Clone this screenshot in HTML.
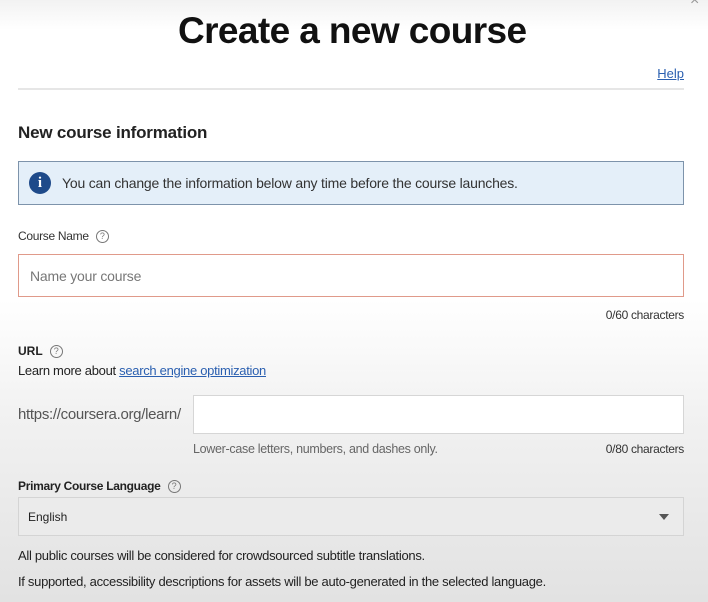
<!DOCTYPE html>
<html><head><meta charset="utf-8"><style>
*{margin:0;padding:0;box-sizing:border-box}
html,body{width:708px;height:602px;overflow:hidden}
body{font-family:"Liberation Sans",sans-serif;color:#1f1f1f;position:relative;
background:linear-gradient(to bottom,#f2f2f2 0px,#fff 30px,#fff 300px,#f1f1f1 420px,#e2e2e2 602px)}
.a{position:absolute;white-space:nowrap}
.q{display:inline-block;width:13px;height:13px;border:1px solid #777;border-radius:50%;font-size:9px;line-height:11px;text-align:center;color:#777;vertical-align:middle;margin-left:4px}
</style></head><body>
<div class="a" style="left:178px;top:10px;font-size:37px;font-weight:bold;letter-spacing:-0.6px;color:#111">Create a new course</div>
<div class="a" style="right:24px;top:66px;font-size:13px;color:#2a5fb0;text-decoration:underline">Help</div>
<div class="a" style="left:18px;top:88px;width:666px;height:2px;background:#e6e6e6"></div>
<div class="a" style="left:18px;top:123px;font-size:17px;font-weight:bold;color:#222;letter-spacing:-0.2px">New course information</div>
<div class="a" style="left:18px;top:161px;width:666px;height:44px;background:#e4eff9;border:1px solid #7d93ab"></div>
<div class="a" style="left:29px;top:172px;width:22px;height:22px;border-radius:50%;background:#1e4a8a;color:#fff;font-weight:bold;font-size:15px;text-align:center;line-height:22px;font-family:'Liberation Serif',serif">i</div>
<div class="a" style="left:62px;top:175px;font-size:14px;color:#333;letter-spacing:-0.2px">You can change the information below any time before the course launches.</div>
<div class="a" style="left:18px;top:229px;font-size:12px;color:#333;letter-spacing:-0.3px">Course Name <span class="q">?</span></div>
<div class="a" style="left:18px;top:254px;width:666px;height:43px;border:1px solid #e09a8a;background:#fff"></div>
<div class="a" style="left:30px;top:268px;font-size:14px;color:#777;letter-spacing:-0.2px">Name your course</div>
<div class="a" style="right:24px;top:308px;font-size:12px;color:#333;letter-spacing:-0.3px">0/60 characters</div>
<div class="a" style="left:18px;top:344px;font-size:12px;font-weight:bold;color:#222">URL <span class="q" style="font-weight:normal">?</span></div>
<div class="a" style="left:18px;top:363px;font-size:13px;color:#222;letter-spacing:-0.3px">Learn more about <span style="color:#2a5fb0;text-decoration:underline">search engine optimization</span></div>
<div class="a" style="left:18px;top:406px;font-size:15px;color:#555;letter-spacing:-0.3px">https://coursera.org/learn/</div>
<div class="a" style="left:193px;top:395px;width:491px;height:39px;border:1px solid #d6d6d6;background:#fff"></div>
<div class="a" style="left:193px;top:442px;font-size:12.5px;color:#666;letter-spacing:-0.3px">Lower-case letters, numbers, and dashes only.</div>
<div class="a" style="right:24px;top:442px;font-size:12px;color:#333;letter-spacing:-0.3px">0/80 characters</div>
<div class="a" style="left:18px;top:479px;font-size:12px;font-weight:bold;color:#222;letter-spacing:-0.3px">Primary Course Language <span class="q" style="font-weight:normal">?</span></div>
<div class="a" style="left:18px;top:497px;width:666px;height:39px;border:1px solid #d4d4d4;background:#ebebeb"></div>
<div class="a" style="left:28px;top:510px;font-size:12px;color:#222">English</div>
<div class="a" style="left:659px;top:514px;width:0;height:0;border-left:5px solid transparent;border-right:5px solid transparent;border-top:6px solid #555"></div>
<div class="a" style="left:18px;top:548px;font-size:13px;color:#222;letter-spacing:-0.3px">All public courses will be considered for crowdsourced subtitle translations.</div>
<div class="a" style="left:18px;top:574px;font-size:13px;color:#222;letter-spacing:-0.3px">If supported, accessibility descriptions for assets will be auto-generated in the selected language.</div>
<div class="a" style="left:690px;top:-8px;font-size:16px;color:#999">×</div>
</body></html>
